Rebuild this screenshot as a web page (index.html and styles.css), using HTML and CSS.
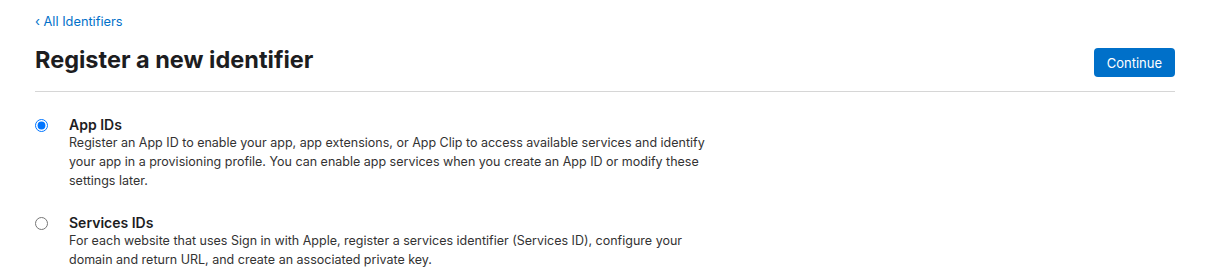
FILE: index.html
```html
<!DOCTYPE html>
<html lang="en">
<head>
    <meta charset="UTF-8">
    <title>Register a new identifier</title>
    <link rel="stylesheet" href="styles.css">
</head>
<body>
    <div class="page">
        <a class="back-link" href="#">&lsaquo; All Identifiers</a>
        <div class="page-header">
            <h1>Register a new identifier</h1>
            <button class="btn-primary">Continue</button>
        </div>
        <div class="options">
            <label class="option">
                <input type="radio" name="idtype" checked>
                <div class="option-text">
                    <div class="option-title">App IDs</div>
                    <p>Register an App ID to enable your app, app extensions, or App Clip to access available services and identify your app in a provisioning profile. You can enable app services when you create an App ID or modify these settings later.</p>
                </div>
            </label>
            <label class="option">
                <input type="radio" name="idtype">
                <div class="option-text">
                    <div class="option-title">Services IDs</div>
                    <p>For each website that uses Sign in with Apple, register a services identifier (Services ID), configure your domain and return URL, and create an associated private key.</p>
                </div>
            </label>
        </div>
    </div>
</body>
</html>
```

FILE: styles.css
```css
body {
    margin: 0;
    background: #fff;
    color: #1d1d1f;
    font-family: Inter, "Noto Sans", sans-serif;
}
.page {
    padding: 10px 40px 0 35px;
}
.back-link {
    display: inline-block;
    color: #0070c9;
    font-size: 12.8px;
    text-decoration: none;
    line-height: 17px;
}
.page-header {
    display: flex;
    justify-content: space-between;
    align-items: flex-end;
    padding: 14px 0 15px;
    border-bottom: 1px solid #d6d6d6;
}
.page-header h1 {
    margin: 0;
    font-size: 23.5px;
    font-weight: 700;
    line-height: 32px;
}
.btn-primary {
    background: #0070c9;
    color: #fff;
    border: none;
    border-radius: 4px;
    font-family: inherit;
    font-size: 13px;
    height: 29px;
    padding: 0 13px;
    margin-bottom: -1px;
}
.options {
    padding-top: 25px;
}
.option {
    display: flex;
    gap: 21px;
    margin-bottom: 25px;
}
.option:last-child {
    margin-bottom: 0;
}
.option input {
    margin: 2px 0 0 0;
    width: 13px;
    height: 13px;
}
.option-title {
    font-size: 14px;
    font-weight: 600;
    line-height: 16px;
}
.option-text p {
    margin: 0;
    max-width: 660px;
    font-size: 12.5px;
    line-height: 19px;
    color: #333;
}
```
